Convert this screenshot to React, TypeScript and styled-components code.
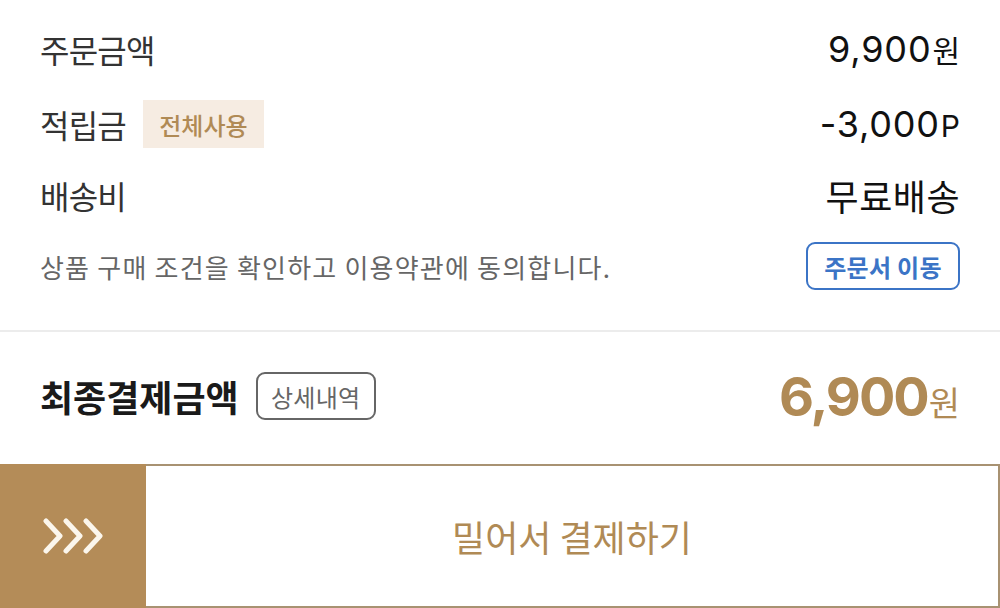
import React from 'react';
import styled, { createGlobalStyle } from 'styled-components';

const Colors = {
  label: '#333333',
  value: '#111111',
  sub: '#666666',
  gold: '#b08a55',
  goldDark: '#b48c58',
  goldBorder: '#a89272',
  badgeBg: '#f6ece2',
  blue: '#3b74c6',
  divider: '#ececec',
};

const KR = `"Noto Sans CJK KR", "Noto Sans", sans-serif`;
const NUM = `Inter, "Noto Sans CJK KR", sans-serif`;

const GlobalStyle = createGlobalStyle`
  html, body {
    margin: 0;
    padding: 0;
    background: #ffffff;
  }
  body {
    font-family: ${KR};
    width: 1000px;
    height: 608px;
    overflow: hidden;
  }
`;

const Page = styled.div`
  width: 1000px;
  display: flex;
  flex-direction: column;
`;

const Summary = styled.section`
  padding: 12px 40px 26px;
  display: flex;
  flex-direction: column;
`;

const Row = styled.div<{ $h: number }>`
  height: ${(p) => p.$h}px;
  display: flex;
  align-items: center;
  justify-content: space-between;
`;

const LabelGroup = styled.div`
  display: flex;
  align-items: center;
  gap: 17px;
`;

const Label = styled.span`
  font-family: ${KR};
  font-size: 32px;
  letter-spacing: -0.8px;
  color: ${Colors.label};
`;

const Amount = styled.span`
  display: flex;
  align-items: baseline;
  color: ${Colors.value};
`;

const Num = styled.span`
  font-family: ${NUM};
  font-size: 36px;
  font-weight: 400;
  letter-spacing: 0.8px;
`;

const Unit = styled.span<{ $size: number; $latin?: boolean }>`
  font-family: ${(p) => (p.$latin ? NUM : KR)};
  font-size: ${(p) => p.$size}px;
  margin-left: 1px;
`;

const ValueText = styled.span`
  font-family: ${KR};
  font-size: 36px;
  letter-spacing: 0.5px;
  color: ${Colors.value};
`;

const Badge = styled.span`
  display: inline-flex;
  align-items: center;
  justify-content: center;
  width: 121px;
  height: 48px;
  background: ${Colors.badgeBg};
  color: ${Colors.gold};
  font-family: ${KR};
  font-size: 24px;
  font-weight: 500;
  letter-spacing: 0;
`;

const Notice = styled.span`
  font-family: ${KR};
  font-size: 26px;
  letter-spacing: 1.2px;
  color: ${Colors.sub};
`;

const OutlineButton = styled.button<{ $color: string; $w: number; $weight: number }>`
  display: inline-flex;
  align-items: center;
  justify-content: center;
  box-sizing: border-box;
  width: ${(p) => p.$w}px;
  height: 48px;
  padding: 0;
  background: #ffffff;
  border: 2px solid ${(p) => p.$color};
  border-radius: 9px;
  color: ${(p) => p.$color};
  font-family: ${KR};
  font-size: 24px;
  font-weight: ${(p) => p.$weight};
  letter-spacing: 0.3px;
`;

const Divider = styled.hr`
  margin: 0;
  border: none;
  height: 2px;
  background: ${Colors.divider};
`;

const Total = styled.section`
  height: 132px;
  padding: 0 40px 4px;
  box-sizing: border-box;
  display: flex;
  align-items: center;
  justify-content: space-between;
`;

const TotalLabel = styled.span`
  font-family: ${KR};
  font-size: 36px;
  font-weight: 700;
  letter-spacing: 0;
  color: #1a1a1a;
`;

const TotalAmount = styled.span`
  display: flex;
  align-items: baseline;
  color: ${Colors.gold};
`;

const TotalNum = styled.span`
  font-family: ${NUM};
  font-size: 54px;
  font-weight: 700;
  letter-spacing: -2px;
`;

const Slider = styled.div`
  height: 144px;
  display: flex;
  box-sizing: border-box;
  border: 2px solid ${Colors.goldBorder};
  border-left: none;
`;

const Handle = styled.div`
  width: 146px;
  margin-top: -2px;
  margin-bottom: -2px;
  background: ${Colors.goldDark};
  display: flex;
  align-items: center;
  justify-content: center;
`;

const Track = styled.div`
  flex: 1;
  display: flex;
  align-items: center;
  justify-content: center;
  font-family: ${KR};
  font-size: 36px;
  letter-spacing: 0;
  color: ${Colors.gold};
`;

const Chevrons = () => (
  <svg width="60" height="36" viewBox="0 0 60 36" fill="none" stroke="#fbf6ec" strokeWidth="5" strokeLinecap="round" strokeLinejoin="round">
    <path d="M3 3 L17 18 L3 33" />
    <path d="M23 3 L37 18 L23 33" />
    <path d="M43 3 L57 18 L43 33" />
  </svg>
);

const App: React.FC = () => {
  return (
    <Page>
      <GlobalStyle />
      <Summary>
        <Row $h={74}>
          <Label>주문금액</Label>
          <Amount>
            <Num>9,900</Num>
            <Unit $size={30}>원</Unit>
          </Amount>
        </Row>
        <Row $h={76}>
          <LabelGroup>
            <Label>적립금</Label>
            <Badge>전체사용</Badge>
          </LabelGroup>
          <Amount>
            <Num>-3,000</Num>
            <Unit $size={30} $latin>P</Unit>
          </Amount>
        </Row>
        <Row $h={66}>
          <Label>배송비</Label>
          <ValueText>무료배송</ValueText>
        </Row>
        <Row $h={76}>
          <Notice>상품 구매 조건을 확인하고 이용약관에 동의합니다.</Notice>
          <OutlineButton $color={Colors.blue} $w={154} $weight={600}>주문서 이동</OutlineButton>
        </Row>
      </Summary>
      <Divider />
      <Total>
        <LabelGroup>
          <TotalLabel>최종결제금액</TotalLabel>
          <OutlineButton $color="#666666" $w={120} $weight={400}>상세내역</OutlineButton>
        </LabelGroup>
        <TotalAmount>
          <TotalNum>6,900</TotalNum>
          <Unit $size={34}>원</Unit>
        </TotalAmount>
      </Total>
      <Slider>
        <Handle>
          <Chevrons />
        </Handle>
        <Track>밀어서 결제하기</Track>
      </Slider>
    </Page>
  );
};

export default App;
